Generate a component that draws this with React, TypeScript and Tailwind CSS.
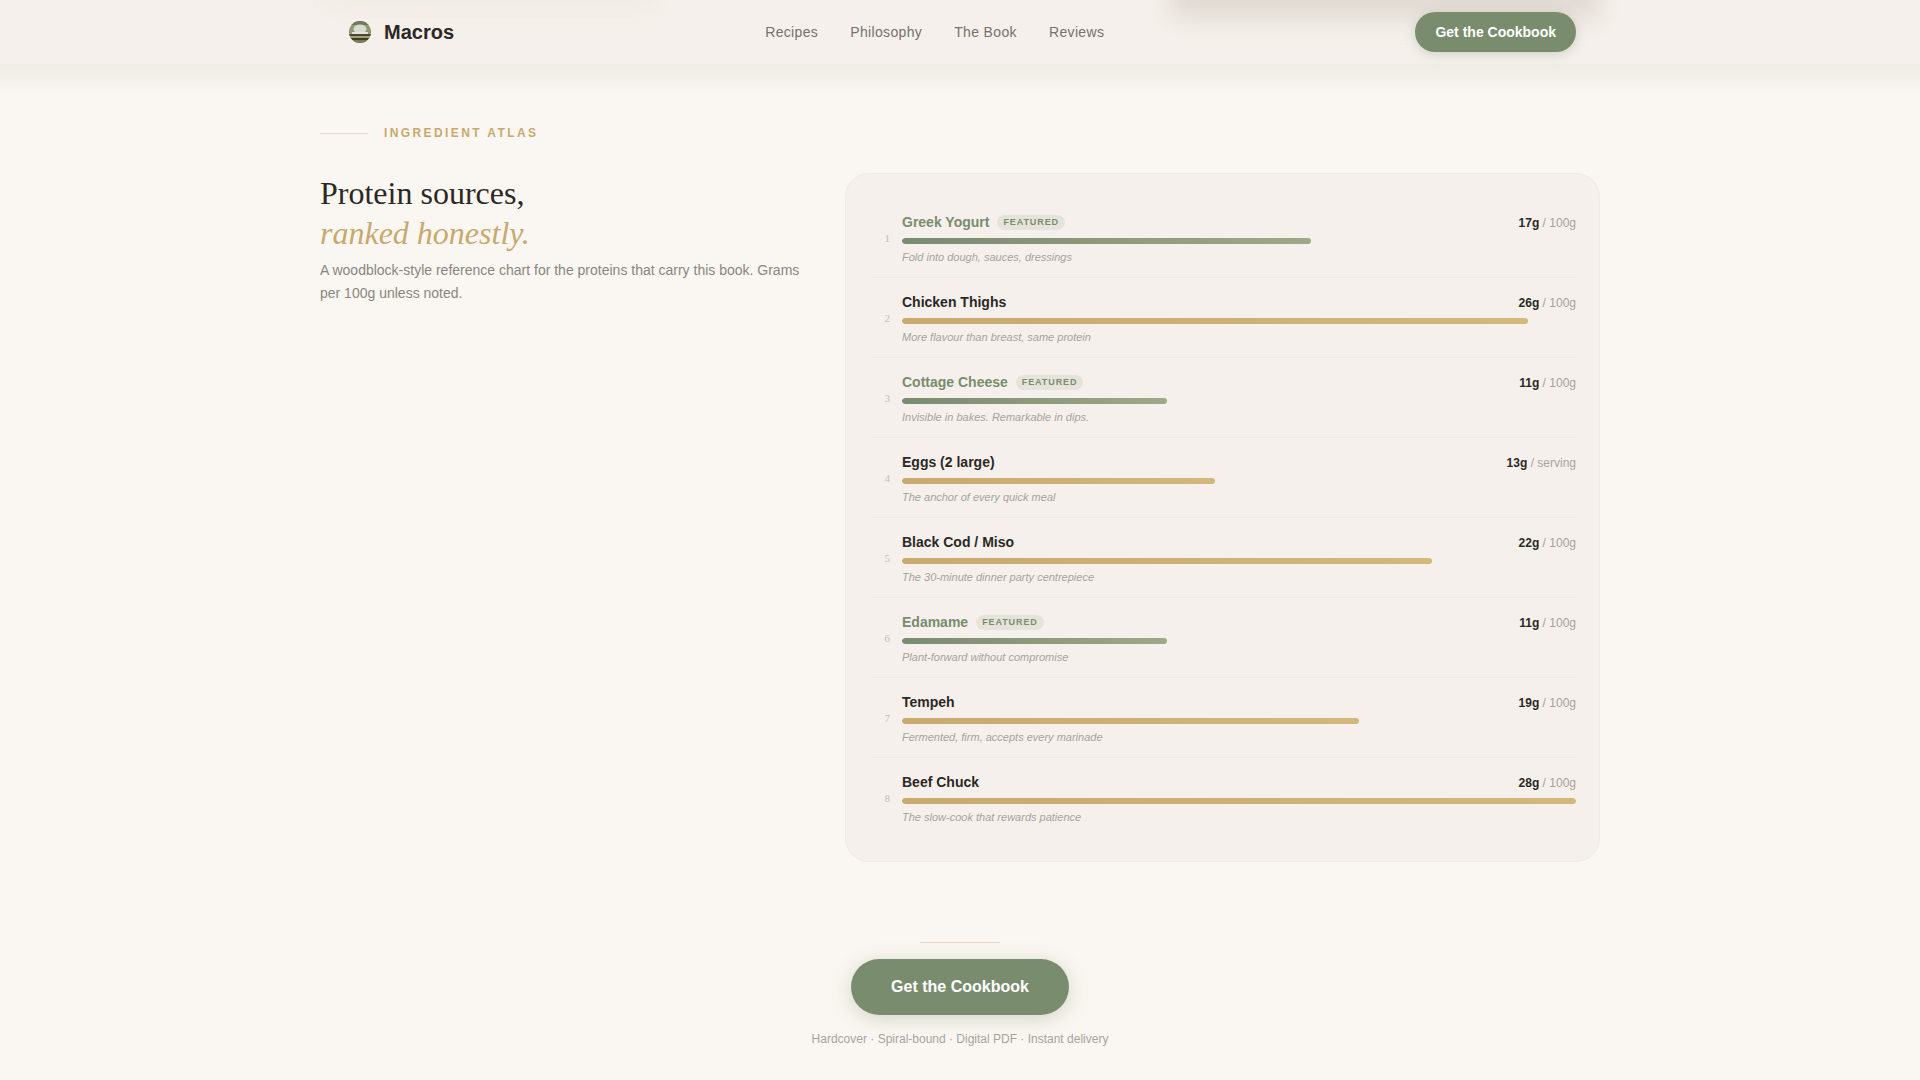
const items = [
  { name: "Greek Yogurt", g: 17, unit: "100g", note: "Fold into dough, sauces, dressings", featured: true },
  { name: "Chicken Thighs", g: 26, unit: "100g", note: "More flavour than breast, same protein", featured: false },
  { name: "Cottage Cheese", g: 11, unit: "100g", note: "Invisible in bakes. Remarkable in dips.", featured: true },
  { name: "Eggs (2 large)", g: 13, unit: "serving", note: "The anchor of every quick meal", featured: false },
  { name: "Black Cod / Miso", g: 22, unit: "100g", note: "The 30-minute dinner party centrepiece", featured: false },
  { name: "Edamame", g: 11, unit: "100g", note: "Plant-forward without compromise", featured: true },
  { name: "Tempeh", g: 19, unit: "100g", note: "Fermented, firm, accepts every marinade", featured: false },
  { name: "Beef Chuck", g: 28, unit: "100g", note: "The slow-cook that rewards patience", featured: false },
];

function Logo() {
  return (
    <svg width="32" height="32" viewBox="0 0 32 32" className="shrink-0">
      <defs>
        <clipPath id="logoClip">
          <circle cx="16" cy="16" r="11" />
        </clipPath>
      </defs>
      <g clipPath="url(#logoClip)">
        <rect x="5" y="5" width="22" height="22" fill="#8d9a74" />
        <rect x="5" y="5" width="22" height="4" fill="#6f7a5e" />
        <ellipse cx="16" cy="13" rx="6.5" ry="4.5" fill="#d9dbd0" />
        <rect x="8" y="16" width="16" height="2" fill="#e8e6da" />
        <rect x="5" y="18" width="22" height="2" fill="#4a4a38" />
        <rect x="5" y="20" width="22" height="2" fill="#a8a06c" />
        <rect x="5" y="22" width="22" height="2" fill="#3f3c2c" />
        <rect x="5" y="24" width="22" height="3" fill="#7c7a58" />
      </g>
    </svg>
  );
}

export default function App() {
  return (
    <div className="h-screen overflow-hidden bg-[#faf7f2] font-['Liberation_Sans',Arial,sans-serif] text-[#2c2825]">
      <nav className="relative h-16 overflow-hidden bg-[#f5f0eb]">
        <div className="absolute left-[1170px] top-[-26px] h-[44px] w-[430px] bg-[#d8d0c8] opacity-70 blur-[12px]" />
        <div className="absolute left-[320px] top-[-20px] h-[30px] w-[340px] bg-[#efe9e2] opacity-60 blur-[12px]" />
      </nav>
      <div className="relative z-10 mx-auto -mt-16 flex h-16 w-[1280px] items-center justify-between px-6">
        <div className="flex items-center gap-2">
          <Logo />
          <span className="text-xl font-bold">Macros</span>
        </div>
        <div className="flex items-center gap-8 text-sm tracking-[0.025em] text-[#78716c]">
          <span>Recipes</span>
          <span>Philosophy</span>
          <span>The Book</span>
          <span>Reviews</span>
        </div>
        <button className="h-10 rounded-full bg-[#7a8c6e] px-5 text-sm font-semibold text-white shadow-[0_2px_12px_rgba(122,140,110,0.3)]">
          Get the Cookbook
        </button>
      </div>
      <div className="h-8 bg-gradient-to-b from-[#efebe5] to-[#faf7f2]" />

      <main className="mx-auto w-[1280px]">
        <div className="mt-[29px] flex items-center gap-4">
          <div className="h-px w-12 bg-[#e3d9c6]" />
          <span className="text-xs font-bold tracking-[0.2em] text-[#c8a96e]">INGREDIENT ATLAS</span>
        </div>

        <div className="mt-8 grid grid-cols-[485px_755px] gap-10">
          <div>
            <h2 className="font-['Liberation_Serif',serif] text-[32px] leading-[40px] font-normal">
              Protein sources,
              <br />
              <em className="text-[#c8a96e]">ranked honestly.</em>
            </h2>
            <p className="mt-[6px] text-sm leading-[23px] text-[#8a8580]">
              A woodblock-style reference chart for the proteins that carry this book. Grams per 100g unless noted.
            </p>
          </div>

          <div className="rounded-3xl border border-[#efeae3] bg-[#f5f0eb] py-6 pr-[23px] pl-[26px]">
            {items.map((it, i) => (
              <div
                key={it.name}
                className={`flex items-center gap-3 pt-[14px] pb-3 ${i < items.length - 1 ? "border-b border-[#ede8e1]" : ""}`}
              >
                <span className="w-[18px] shrink-0 text-right font-['Liberation_Serif',serif] text-[11px] text-[#c4bfb8]">
                  {i + 1}
                </span>
                <div className="min-w-0 flex-1">
                  <div className="flex items-center justify-between">
                    <div className="flex items-center gap-2">
                      <span className={`text-sm leading-[21px] font-semibold ${it.featured ? "text-[#7a8c6e]" : "text-[#2c2825]"}`}>
                        {it.name}
                      </span>
                      {it.featured && (
                        <span className="rounded-full bg-[#e6e4da] px-[6px] py-px text-[9px] font-bold tracking-[0.1em] text-[#7a8c6e]">
                          FEATURED
                        </span>
                      )}
                    </div>
                    <span className="text-xs text-[#a8a29e]">
                      <strong className="font-bold text-[#2c2825]">{it.g}g</strong> / {it.unit}
                    </span>
                  </div>
                  <div className="mt-[5px] h-[6px] overflow-hidden rounded-full">
                    <div
                      className={`h-full rounded-full bg-gradient-to-r ${it.featured ? "from-[#7a8c6e] to-[#9aab8a]" : "from-[#c8a96e] to-[#d4b87a]"}`}
                      style={{ width: `${(it.g / 28) * 100}%` }}
                    />
                  </div>
                  <p className="mt-[5px] text-[11px] leading-[16px] text-[#a8a29e] italic">{it.note}</p>
                </div>
              </div>
            ))}
          </div>
        </div>

        <div className="mt-20 flex flex-col items-center">
          <div className="h-px w-20 bg-[#e3d9c6]" />
          <button className="mt-4 h-14 rounded-full bg-[#7a8c6e] px-10 text-base font-bold text-white shadow-[0_4px_20px_rgba(122,140,110,0.3)]">
            Get the Cookbook
          </button>
          <p className="mt-4 text-xs text-[#a8a29e]">Hardcover · Spiral-bound · Digital PDF · Instant delivery</p>
        </div>
      </main>
    </div>
  );
}
